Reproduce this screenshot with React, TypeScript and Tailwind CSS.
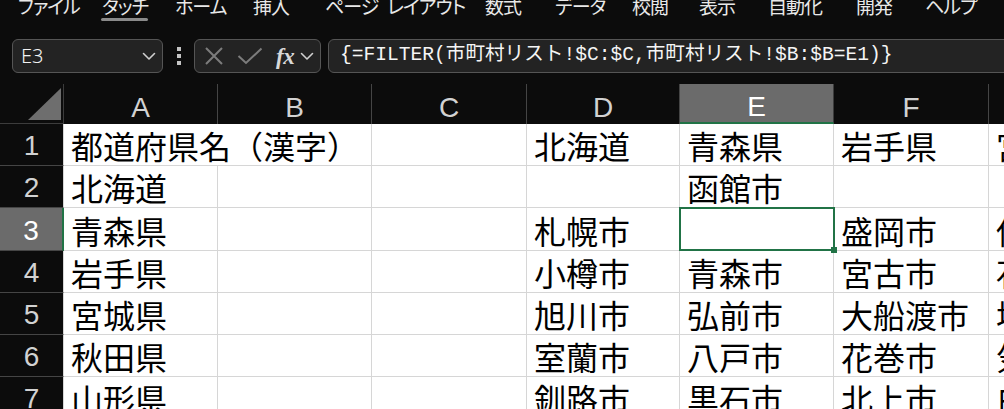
import React from "react";

const tabs: { label: string; w: number; active?: boolean }[] = [
  { label: "ファイル", w: 84 },
  { label: "タッチ", w: 73, active: true },
  { label: "ホーム", w: 78 },
  { label: "挿入", w: 72 },
  { label: "ページ レイアウト", w: 160 },
  { label: "数式", w: 70 },
  { label: "データ", w: 77 },
  { label: "校閲", w: 67 },
  { label: "表示", w: 69 },
  { label: "自動化", w: 88 },
  { label: "開発", w: 69 },
  { label: "ヘルプ", w: 70 },
];

const colLetters = ["A", "B", "C", "D", "E", "F", "G"];

const data: string[][] = [
  ["都道府県名（漢字）", "", "", "北海道", "青森県", "岩手県", "宮城県"],
  ["北海道", "", "", "", "函館市", "", ""],
  ["青森県", "", "", "札幌市", "", "盛岡市", "仙台市"],
  ["岩手県", "", "", "小樽市", "青森市", "宮古市", "石巻市"],
  ["宮城県", "", "", "旭川市", "弘前市", "大船渡市", "塩竈市"],
  ["秋田県", "", "", "室蘭市", "八戸市", "花巻市", "気仙沼市"],
  ["山形県", "", "", "釧路市", "黒石市", "北上市", "白石市"],
];

const ACTIVE_ROW = 2; // row 3
const ACTIVE_COL = 4; // column E

function Chevron() {
  return (
    <svg width="14" height="9" viewBox="0 0 14 9" fill="none">
      <path d="M1.5 1.5 L7 7 L12.5 1.5" stroke="#cfcfcf" strokeWidth="1.6" strokeLinecap="round" strokeLinejoin="round" />
    </svg>
  );
}

function MenuBar() {
  return (
    <div className="h-[39px] shrink-0 flex items-start pl-[18px]">
      {tabs.map((t) => (
        <div key={t.label} className="shrink-0 flex flex-col items-start" style={{ width: t.w }}>
          <span className="mt-[-4px] flex text-[19px] leading-none tracking-[-1px] text-[#e8e8e8] whitespace-nowrap [font-feature-settings:'palt']">
            {t.label.split(" ").map((part, i) => (
              <span key={i} className={i > 0 ? "ml-[9px]" : ""}>
                {part}
              </span>
            ))}
          </span>
          {t.active && <span className="mt-[3px] -ml-[1px] h-[3px] w-[47px] rounded-full bg-[#8a8a8a]" />}
        </div>
      ))}
    </div>
  );
}

function FormulaBar() {
  return (
    <div className="h-[34px] shrink-0 flex items-stretch pl-[12px]">
      <div className="w-[151px] shrink-0 rounded-[6px] border border-[#555555] bg-[#232323] flex items-center justify-between pl-[8px] pr-[6px]">
        <span className="text-[20px] leading-none text-[#f2f2f2] font-light font-['Noto_Sans','Liberation_Sans',sans-serif]">E3</span>
        <Chevron />
      </div>
      <div className="w-[31px] shrink-0 flex flex-col items-center justify-center gap-[3px]">
        <span className="w-[4px] h-[4px] bg-[#c4c4c4]" />
        <span className="w-[4px] h-[4px] bg-[#c4c4c4]" />
        <span className="w-[4px] h-[4px] bg-[#c4c4c4]" />
      </div>
      <div className="w-[127px] shrink-0 rounded-[6px] border border-[#555555] bg-[#232323] flex items-center pl-[9px] pr-[4px]">
        <svg width="20" height="20" viewBox="0 0 20 20" fill="none" className="shrink-0">
          <path d="M2 2 L18 18 M18 2 L2 18" stroke="#7c7c7c" strokeWidth="2" />
        </svg>
        <svg width="26" height="18" viewBox="0 0 26 18" fill="none" className="ml-[13px] shrink-0">
          <path d="M1.5 9 L9 16 L24.5 1.5" stroke="#7c7c7c" strokeWidth="2" />
        </svg>
        <span className="ml-[13px] text-[23px] leading-none italic font-bold text-[#d8d8d8] font-['Liberation_Serif',serif] tracking-[-0.5px]">
          fx
        </span>
        <span className="ml-[6px]">
          <Chevron />
        </span>
      </div>
      <div className="ml-[7px] flex-1 -mr-[12px] rounded-[6px] border border-[#555555] bg-[#232323] flex items-center pl-[11px]">
        <span className="text-[19.6px] leading-none text-[#f5f5f5] whitespace-nowrap font-['Liberation_Mono','Noto_Sans_CJK_JP',monospace]">
          {"{=FILTER(市町村リスト!$C:$C,市町村リスト!$B:$B=E1)}"}
        </span>
      </div>
    </div>
  );
}

function CornerCell() {
  return (
    <div className="bg-[#0c0c0c] border-r border-b border-[#3c3c3c]">
      <svg width="64" height="40" viewBox="0 0 64 40">
        <polygon points="28,36 61,36 61,4" fill="#6e6e6e" />
      </svg>
    </div>
  );
}

function Sheet() {
  return (
    <div className="mt-[11px] shrink-0 w-max grid grid-cols-[64px_154px_154px_155px_153px_154px_155px_170px] grid-rows-[40px_42px_42px_43px_42px_42px_42px_42px] bg-white">
      <CornerCell />
      {colLetters.map((c, i) => (
        <div
          key={c}
          className={
            i === ACTIVE_COL
              ? "bg-[#6b6b6b] border-r border-[#3c3c3c] border-b-2 border-b-[#217346] flex items-end justify-center pb-[1px] text-[28px] leading-none text-white font-['Liberation_Sans',sans-serif]"
              : "bg-[#0c0c0c] border-r border-[#454545] flex items-end justify-center pb-[2px] text-[28px] leading-none text-[#d2d2d2] font-['Liberation_Sans',sans-serif]"
          }
        >
          {c}
        </div>
      ))}
      {data.map((row, r) => (
        <React.Fragment key={r}>
          <div
            className={
              r === ACTIVE_ROW
                ? "bg-[#6b6b6b] border-b border-[#454545] border-r-2 border-r-[#217346] flex items-end justify-center pb-[5px] text-[28px] leading-none text-white font-['Liberation_Sans',sans-serif]"
                : "bg-[#0c0c0c] border-b border-[#454545] border-r border-r-[#d6d6d6] flex items-end justify-center pb-[5px] text-[28px] leading-none text-[#d2d2d2] font-['Liberation_Sans',sans-serif]"
            }
          >
            {r + 1}
          </div>
          {row.map((text, c) => {
            const overflowing = r === 0 && c === 0;
            const active = r === ACTIVE_ROW && c === ACTIVE_COL;
            return (
              <div
                key={c}
                className={
                  (overflowing
                    ? "relative z-[1] border-b overflow-visible "
                    : "border-r border-b overflow-hidden ") +
                  (active ? "relative overflow-visible " : "") +
                  "border-[#d6d6d6] flex items-end pl-[7px] pb-[4px] text-[32px] leading-none text-black whitespace-nowrap font-['Noto_Sans_CJK_JP',sans-serif]"
                }
              >
                {text}
                {active && (
                  <>
                    <span className="absolute z-10 left-[-1px] top-[-1px] w-[156px] h-[44px] border-2 border-[#217346]" />
                    <span className="absolute z-20 right-[-4px] bottom-[-3px] w-[6px] h-[6px] bg-[#217346]" />
                  </>
                )}
              </div>
            );
          })}
        </React.Fragment>
      ))}
    </div>
  );
}

export default function App() {
  return (
    <div className="w-[1004px] h-[409px] overflow-hidden bg-[#0c0c0c] font-['Noto_Sans_CJK_JP',sans-serif] flex flex-col">
      <MenuBar />
      <FormulaBar />
      <Sheet />
    </div>
  );
}
